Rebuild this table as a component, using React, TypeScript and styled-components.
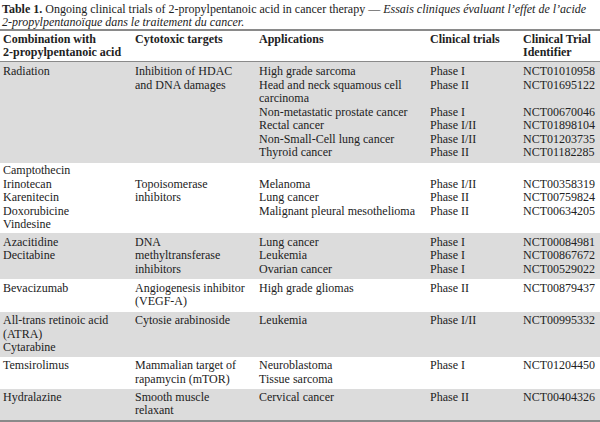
import React from "react";
import styled, { createGlobalStyle } from "styled-components";

const Global = createGlobalStyle`
  html, body { margin: 0; padding: 0; background: #ffffff; }
  body { font-family: "Liberation Serif", "Times New Roman", serif; color: #222; }
`;

const Page = styled.div`
  width: 600px;
  height: 422px;
  overflow: hidden;
  background: #fff;
`;

const Caption = styled.div`
  font-size: 12px;
  line-height: 12.5px;
  padding: 3px 2px 0 2px;
  height: 26px;
  color: #222;
  white-space: nowrap;
`;

const Line = styled.div`
  white-space: nowrap;
`;

const Table = styled.table`
  width: 600px;
  border-collapse: collapse;
  table-layout: fixed;
  font-size: 12px;
  line-height: 13.5px;
  border-top: 2px solid #8a8a8a;
  border-bottom: 3px solid #8a8a8a;
`;

const Head = styled.thead`
  border-bottom: 1.5px solid #8a8a8a;
`;

const Th = styled.th`
  text-align: left;
  vertical-align: top;
  font-weight: bold;
  padding: 1.5px 0 1.5px 3px;
  white-space: nowrap;
`;

const Row = styled.tr<{ $shade: boolean }>`
  background: ${(p) => (p.$shade ? "#dcdcdc" : "#ffffff")};
`;

const Td = styled.td<{ $pt: number; $pb: number }>`
  vertical-align: top;
  padding: ${(p) => p.$pt}px 0 ${(p) => p.$pb}px 3px;
  white-space: nowrap;
`;

const Offset = styled.div<{ $lines: number }>`
  padding-top: ${(p) => p.$lines * 13.5}px;
`;

type RowData = {
  cells: string[][];
  offset?: number[];
  pt: number;
  pb: number;
};

const rows: RowData[] = [
  {
    cells: [
      ["Radiation"],
      ["Inhibition of HDAC", "and DNA damages"],
      [
        "High grade sarcoma",
        "Head and neck squamous cell",
        "carcinoma",
        "Non-metastatic prostate cancer",
        "Rectal cancer",
        "Non-Small-Cell lung cancer",
        "Thyroid cancer",
      ],
      ["Phase I", "Phase II", "", "Phase I", "Phase I/II", "Phase I/II", "Phase II"],
      ["NCT01010958", "NCT01695122", "", "NCT00670046", "NCT01898104", "NCT01203735", "NCT01182285"],
    ],
    pt: 3,
    pb: 3,
  },
  {
    cells: [
      ["Camptothecin", "Irinotecan", "Karenitecin", "Doxorubicine", "Vindesine"],
      ["Topoisomerase", "inhibitors"],
      ["Melanoma", "Lung cancer", "Malignant pleural mesothelioma"],
      ["Phase I/II", "Phase II", "Phase II"],
      ["NCT00358319", "NCT00759824", "NCT00634205"],
    ],
    offset: [0, 1, 1, 1, 1],
    pt: 1.5,
    pb: 1,
  },
  {
    cells: [
      ["Azacitidine", "Decitabine"],
      ["DNA", "methyltransferase", "inhibitors"],
      ["Lung cancer", "Leukemia", "Ovarian cancer"],
      ["Phase I", "Phase I", "Phase I"],
      ["NCT00084981", "NCT00867672", "NCT00529022"],
    ],
    pt: 3,
    pb: 2.5,
  },
  {
    cells: [
      ["Bevacizumab"],
      ["Angiogenesis inhibitor", "(VEGF-A)"],
      ["High grade gliomas"],
      ["Phase II"],
      ["NCT00879437"],
    ],
    pt: 3,
    pb: 3,
  },
  {
    cells: [
      ["All-trans retinoic acid", "(ATRA)", "Cytarabine"],
      ["Cytosie arabinoside"],
      ["Leukemia"],
      ["Phase I/II"],
      ["NCT00995332"],
    ],
    pt: 2.5,
    pb: 2,
  },
  {
    cells: [
      ["Temsirolimus"],
      ["Mammalian target of", "rapamycin (mTOR)"],
      ["Neuroblastoma", "Tissue sarcoma"],
      ["Phase I"],
      ["NCT01204450"],
    ],
    pt: 2.5,
    pb: 2.5,
  },
  {
    cells: [
      ["Hydralazine"],
      ["Smooth muscle", "relaxant"],
      ["Cervical cancer"],
      ["Phase II"],
      ["NCT00404326"],
    ],
    pt: 2,
    pb: 2,
  },
];

const widths = [132, 124, 171, 93, 80];

export default function App() {
  return (
    <Page>
      <Global />
      <Caption>
        <Line>
          <b>Table 1.</b> Ongoing clinical trials of 2-propylpentanoic acid in cancer therapy —{" "}
          <i>Essais cliniques évaluant l’effet de l’acide</i>
        </Line>
        <Line>
          <i>2-propylpentanoïque dans le traitement du cancer.</i>
        </Line>
      </Caption>
      <Table>
        <colgroup>
          {widths.map((w, i) => (
            <col key={i} style={{ width: w }} />
          ))}
        </colgroup>
        <Head>
          <tr>
            <Th>
              Combination with
              <br />
              2-propylpentanoic acid
            </Th>
            <Th>Cytotoxic targets</Th>
            <Th>Applications</Th>
            <Th>Clinical trials</Th>
            <Th>
              Clinical Trial
              <br />
              Identifier
            </Th>
          </tr>
        </Head>
        <tbody>
          {rows.map((r, ri) => (
            <Row key={ri} $shade={ri % 2 === 0}>
              {r.cells.map((c, ci) => (
                <Td key={ci} $pt={r.pt} $pb={r.pb}>
                  <Offset $lines={r.offset ? r.offset[ci] : 0}>
                    {c.map((l, li) => (
                      <Line key={li}>{l === "" ? "\u00a0" : l}</Line>
                    ))}
                  </Offset>
                </Td>
              ))}
            </Row>
          ))}
        </tbody>
      </Table>
    </Page>
  );
}
